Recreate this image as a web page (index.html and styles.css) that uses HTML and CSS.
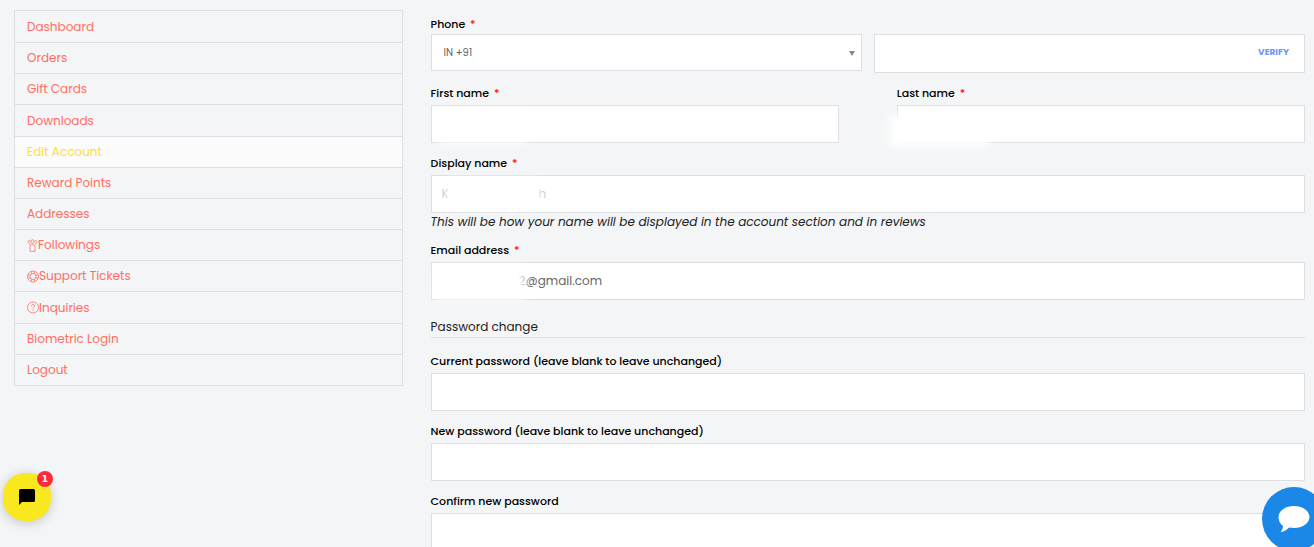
FILE: index.html
```html
<!DOCTYPE html>
<html lang="en">
<head>
  <meta charset="UTF-8" />
  <meta name="viewport" content="width=device-width, initial-scale=1" />
  <title>Edit Account</title>
  <link rel="stylesheet" href="styles.css">
</head>
<body>

  <div class="account">
    <nav class="account-nav">
      <ul>
        <li><a href="#">Dashboard</a></li>
        <li><a href="#">Orders</a></li>
        <li><a href="#">Gift Cards</a></li>
        <li><a href="#">Downloads</a></li>
        <li class="active"><a href="#">Edit Account</a></li>
        <li><a href="#">Reward Points</a></li>
        <li><a href="#">Addresses</a></li>
        <li><a href="#">
          <svg width="11" height="13" viewBox="0 0 11 13"><circle cx="5.500" cy="2.500" r="1.700"/><path d="M3.900 3.200 2.100 1.300.7 2.800l2.300 2.600v6.900h5V5.400l2.300-2.600-1.400-1.500-1.800 1.900M4.300 4.800l1.200 1.500 1.200-1.500"/></svg>Followings</a></li>
        <li><a href="#">
          <svg width="12" height="13" viewBox="0 0 12 13"><circle cx="6" cy="6.500" r="5.500"/><circle cx="6" cy="6.500" r="3"/><path d="M4.600 1.400v2.500M7.400 1.400v2.500M4.600 9.100v2.500M7.400 9.100v2.500M.9 5.100h2.500M.9 7.900h2.500M8.600 5.100h2.500M8.600 7.900h2.500"/></svg>Support Tickets</a></li>
        <li><a href="#">
          <svg width="12" height="13" viewBox="0 0 12 13"><circle cx="6" cy="6.500" r="5.500"/><path d="M4.300 5.200c0-2.300 3.400-2.200 3.400-.2 0 1.300-1.700 1.300-1.700 2.700M6 8.700v1"/></svg>Inquiries</a></li>
        <li><a href="#">Biometric Login</a></li>
        <li><a href="#">Logout</a></li>
      </ul>
    </nav>

    <form class="account-form">
      <div class="field phone">
        <label for="code">Phone <span class="required">*</span></label>
        <div class="phone-row">
          <div class="select-wrap">
            <select id="code">
              <option>IN +91</option>
            </select>
          </div>
          <div class="verify-wrap">
            <input type="tel" aria-label="Phone number">
            <button type="button" class="verify">VERIFY</button>
          </div>
        </div>
      </div>

      <div class="name-row">
        <div class="field">
          <label for="first">First name <span class="required">*</span></label>
          <input type="text" id="first">
          <span class="mask mask-first"></span>
        </div>
        <div class="field">
          <label for="last">Last name <span class="required">*</span></label>
          <input type="text" id="last">
          <span class="mask mask-last"></span>
        </div>
      </div>

      <div class="field">
        <label for="display">Display name <span class="required">*</span></label>
        <input type="text" id="display" class="faded" value="K&nbsp;&nbsp;&nbsp;&nbsp;&nbsp;&nbsp;&nbsp;&nbsp;&nbsp;&nbsp;&nbsp;&nbsp;&nbsp;&nbsp;&nbsp;&nbsp;&nbsp;&nbsp;&nbsp;&nbsp;&nbsp;&nbsp;&nbsp;&nbsp;&nbsp;&nbsp;&nbsp;&nbsp;h">
        <em class="hint">This will be how your name will be displayed in the account section and in reviews</em>
        <span class="mask mask-display"></span>
      </div>

      <div class="field">
        <label for="email">Email address <span class="required">*</span></label>
        <input type="email" id="email" class="email" value="2@gmail.com">
        <span class="mask mask-email"></span>
      </div>

      <fieldset>
        <legend>Password change</legend>
        <div class="field">
          <label for="current">Current password (leave blank to leave unchanged)</label>
          <input type="password" id="current">
        </div>
        <div class="field">
          <label for="new">New password (leave blank to leave unchanged)</label>
          <input type="password" id="new">
        </div>
        <div class="field">
          <label for="confirm">Confirm new password</label>
          <input type="password" id="confirm">
        </div>
      </fieldset>
    </form>
  </div>

  <button class="chat-yellow" aria-label="Messages">
    <svg width="18" height="18" viewBox="0 0 18 18"><path d="M2.500 1h13A1.500 1.500 0 0 1 17 2.500v10a1.500 1.500 0 0 1-1.500 1.500H4l-3 3V2.500A1.500 1.500 0 0 1 2.500 1z"/></svg>
    <span class="badge">1</span>
  </button>
  <button class="chat-blue" aria-label="Live chat">
    <svg width="32" height="28" viewBox="0 0 32 28"><path d="M16 1c8.500 0 15.500 4.800 15.500 11S24.500 23 16 23c-1.700 0-3.300-.2-4.800-.5C9 24.600 6 26.600 2.500 27.200c1.300-1.600 2.300-3.500 2.500-6.200C2.200 19 .5 15.700.5 12 .5 5.800 7.500 1 16 1z"/></svg>
  </button>

</body>
</html>
```
FILE: styles.css
```css
* {
  box-sizing: border-box;
}
body {
  margin: 0;
  background: #f3f5f7;
  color: #222;
  font-family: Poppins, Inter, "Liberation Sans", sans-serif;
  font-size: 12px;
  overflow-x: hidden;
}
.account {
  display: grid;
  grid-template-columns: 4fr 9fr;
  gap: 28px;
  align-items: start;
  padding: 10px 9px 10px 14px;
}

/* Sidebar */
.account-nav ul {
  display: grid;
  grid-auto-rows: 1fr;
  min-height: 376px;
  margin: 0;
  padding: 0;
  list-style: none;
  border: 1px solid #dddfe2;
}
.account-nav li {
  display: flex;
}
.account-nav li + li {
  border-top: 1px solid #dddfe2;
}
.account-nav .active {
  background: #fbfbfb;
}
.account-nav a {
  display: flex;
  align-items: center;
  flex: 1;
  padding: 0 12px;
  color: #ff6f61;
  text-decoration: none;
}
.account-nav .active a {
  color: #ffe02e;
}
.account-nav svg {
  fill: none;
  stroke: #ff6f61;
  stroke-width: 0.8;
}

/* Form */
.account-form {
  display: flex;
  flex-direction: column;
  gap: 10px;
  padding-top: 4px;
}
.field {
  position: relative;
  display: flex;
  flex-direction: column;
}
label {
  margin-bottom: 2px;
  color: #000;
  font-size: 11px;
  font-weight: 500;
  line-height: 20px;
}
.required {
  margin-left: 2px;
  color: #ff1a1a;
}
input,
select {
  width: 100%;
  height: 38px;
  padding: 0 10px;
  border: 1px solid #dddfe2;
  border-radius: 0;
  background: #fff;
  color: #666;
  font-family: inherit;
  font-size: 12px;
}
.phone label {
  margin-bottom: 0;
}
.phone-row {
  display: grid;
  grid-template-columns: 1fr 1fr;
  gap: 12px;
  align-items: start;
}
.select-wrap,
.verify-wrap {
  position: relative;
}
.select-wrap::after {
  content: "";
  position: absolute;
  top: 17px;
  right: 7px;
  border: 3px solid transparent;
  border-top: 5px solid #888;
  border-bottom: 0;
}
select {
  display: block;
  height: 37px;
  padding: 0 12px;
  font-size: 10px;
  appearance: none;
}
.verify-wrap input {
  display: block;
  height: 39px;
}
.verify {
  position: absolute;
  top: 8px;
  right: 16px;
  height: 20px;
  padding: 0;
  border: none;
  background: none;
  color: #7097f5;
  font-family: inherit;
  font-size: 9px;
  font-weight: 700;
  cursor: pointer;
}
.name-row {
  display: grid;
  grid-template-columns: 1fr 1fr;
  gap: 58px;
}
.hint {
  line-height: 17px;
}
.faded {
  color: #ccc;
}
.email {
  padding-left: 87px;
}
fieldset {
  display: flex;
  flex-direction: column;
  gap: 10px;
  min-width: 0;
  margin: 6px 0 0;
  padding: 0;
  border: 0;
}
legend {
  width: 100%;
  margin-bottom: 13px;
  padding: 0;
  border-bottom: 1px solid #dddfe2;
  line-height: 21px;
}

/* Soft white patches over private values */
.mask {
  position: absolute;
  top: 30px;
  left: 6px;
  width: 90px;
  height: 30px;
  background: #fff;
  filter: blur(4px);
  pointer-events: none;
}
.mask-last {
  top: 32px;
  left: -8px;
  width: 100px;
  height: 32px;
}
.mask-display {
  top: 26px;
  left: 18px;
}
.mask-email {
  top: 30px;
  left: 4px;
}

/* Chat buttons */
.chat-yellow,
.chat-blue {
  position: fixed;
  display: flex;
  align-items: center;
  justify-content: center;
  padding: 0;
  border: none;
  cursor: pointer;
}
.chat-yellow {
  left: 3px;
  bottom: 26px;
  width: 48px;
  height: 48px;
  border-radius: 22px;
  background: #f9e71f;
  box-shadow: 0 2px 12px rgba(0,0,0,0.2);
}
.badge {
  position: absolute;
  top: -2px;
  right: -2px;
  width: 16px;
  height: 16px;
  border-radius: 50%;
  background: #fb2b3a;
  color: #fff;
  font-family: "DejaVu Sans", sans-serif;
  font-size: 9px;
  font-weight: 700;
  line-height: 16px;
}
.chat-blue {
  right: -12px;
  bottom: -4px;
  width: 64px;
  height: 64px;
  border-radius: 50%;
  background: #1b87e6;
}
.chat-blue svg {
  fill: #fff;
}
```
